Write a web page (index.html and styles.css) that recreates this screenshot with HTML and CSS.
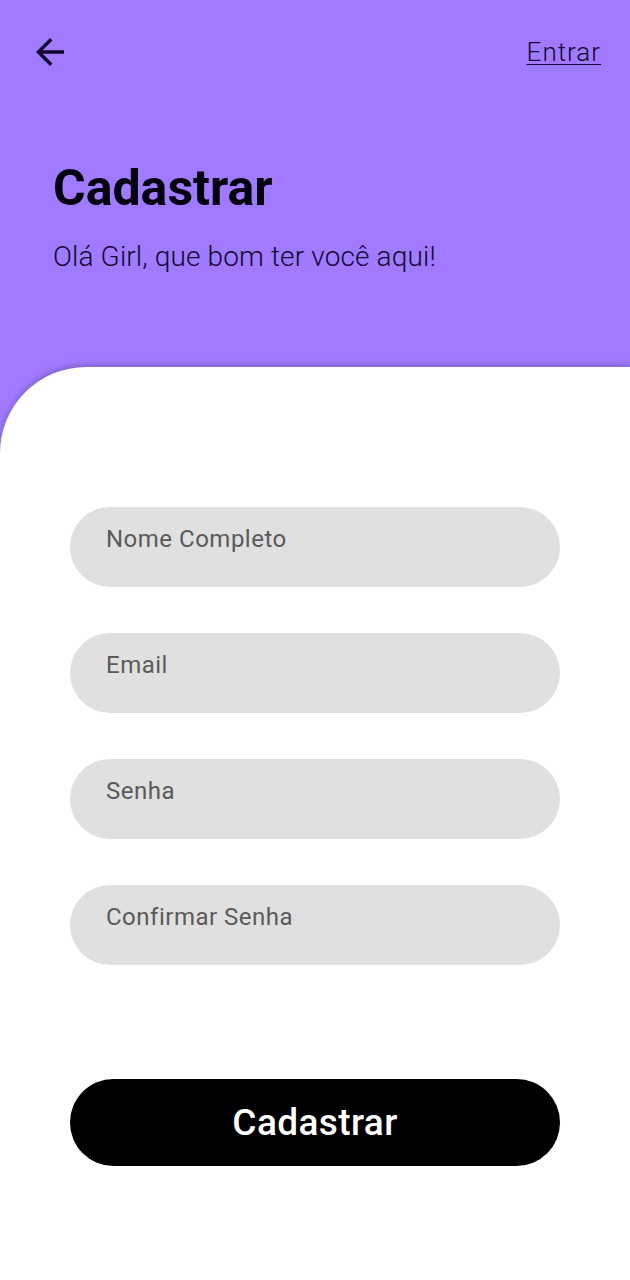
FILE: index.html
```html
<!DOCTYPE html>
<html lang="pt-BR">
<head>
<meta charset="utf-8">
<title>Cadastrar</title>
<link rel="stylesheet" href="styles.css">
</head>
<body>
<div class="screen">
  <header class="hero">
    <div class="topbar">
      <button class="back" aria-label="Voltar">
        <svg viewBox="0 0 24 24" width="42" height="42"><path d="M20 11H7.83l5.59-5.59L12 4l-8 8 8 8 1.41-1.41L7.83 13H20v-2z" fill="#14082e"/></svg>
      </button>
      <a class="login" href="#">Entrar</a>
    </div>
    <h1 class="title">Cadastrar</h1>
    <p class="subtitle">Olá Girl, que bom ter você aqui!</p>
  </header>
  <main class="card">
    <form class="form">
      <div class="field">Nome Completo</div>
      <div class="field">Email</div>
      <div class="field">Senha</div>
      <div class="field">Confirmar Senha</div>
      <button type="button" class="submit">Cadastrar</button>
    </form>
  </main>
</div>
</body>
</html>
```

FILE: styles.css
```css
* { box-sizing: border-box; }
html, body { margin: 0; padding: 0; }
body { font-family: Roboto, "Noto Sans", sans-serif; }

.screen {
  min-height: 1280px;
  background: #a07bff;
  display: flex;
  flex-direction: column;
}

.hero {
  height: 367px;
  padding: 0 29px 0 53px;
}

.topbar {
  display: flex;
  justify-content: space-between;
  align-items: center;
  height: 104px;
  margin-left: -24px;
}

.back {
  background: none;
  border: 0;
  padding: 0;
  width: 42px;
  height: 42px;
  display: flex;
}

.login {
  font-size: 26px;
  font-weight: 300;
  letter-spacing: 1px;
  color: #14082e;
  text-decoration: underline;
  text-underline-offset: 3px;
  text-decoration-thickness: 1px;
}

.title {
  margin: 54px 0 0;
  font-size: 50px;
  font-weight: 700;
  line-height: 60px;
  color: #05010e;
}

.subtitle {
  margin: 23px 0 0;
  font-size: 28px;
  font-weight: 300;
  letter-spacing: 0.13px;
  line-height: 32px;
  color: #14082e;
}

.card {
  flex: 1;
  background: #fff;
  border-top-left-radius: 86px;
  box-shadow: 0 -2px 6px rgba(60, 40, 90, 0.35);
  padding: 140px 70px 0;
}

.form {
  display: flex;
  flex-direction: column;
  gap: 46px;
}

.field {
  height: 80px;
  border-radius: 40px;
  background: #e0e0e0;
  padding: 18px 36px 0;
  font-size: 24px;
  letter-spacing: 0.5px;
  line-height: 28px;
  color: #5a5a5a;
}

.submit {
  margin-top: 68px;
  height: 87px;
  border: 0;
  border-radius: 44px;
  background: #000;
  color: #fff;
  font-family: Roboto, sans-serif;
  font-size: 37px;
  font-weight: 500;
  letter-spacing: 0.4px;
}
```
